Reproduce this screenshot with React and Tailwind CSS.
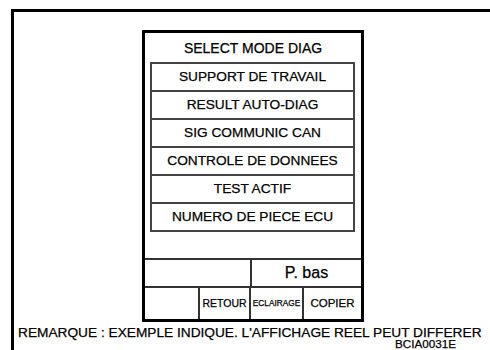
const font = { fontFamily: '"Liberation Sans", Arial, sans-serif' };

const items = [
  'SUPPORT DE TRAVAIL',
  'RESULT AUTO-DIAG',
  'SIG COMMUNIC CAN',
  'CONTROLE DE DONNEES',
  'TEST ACTIF',
  'NUMERO DE PIECE ECU',
];

export default function App() {
  return (
    <div
      className="w-[490px] h-[350px] bg-white overflow-hidden text-black [-webkit-text-stroke:0.25px_#000]"
      style={font}
    >
      {/* outer frame, open on the right and bottom */}
      <div className="relative ml-[11px] mt-[9px] h-[341px] border-l-[3px] border-t-[3px] border-black">
        <div className="ml-[128px] mt-[18px] w-[222px] border-[3px] border-black">
          <div className="h-[29px] flex items-center justify-center text-[14px] leading-none">
            SELECT MODE DIAG
          </div>

          <div className="ml-[5px] w-[205px] border-2 border-[#444]">
            {items.map((label, i) => (
              <div
                key={label}
                className={`h-[26px] flex items-center justify-center text-[13.7px] leading-none ${
                  i < items.length - 1 ? 'box-content border-b-2 border-[#444]' : ''
                }`}
              >
                {label}
              </div>
            ))}
          </div>

          <div className="h-[26px]" />

          <div className="flex h-[28px] border-t-2 border-[#333]">
            <div className="w-[107px] border-r-2 border-[#333]" />
            <div className="flex-1 flex items-center justify-center text-[16px] leading-none">P. bas</div>
          </div>

          <div className="flex h-[33px] border-t-2 border-[#333]">
            <div className="w-[55px] border-r-2 border-[#333]" />
            <div className="w-[51px] border-r-2 border-[#333] flex items-center justify-center text-[10.5px] leading-none">
              RETOUR
            </div>
            <div className="w-[53px] border-r-2 border-[#333] flex items-center justify-center text-[8.3px] leading-none">
              ECLAIRAGE
            </div>
            <div className="flex-1 flex items-center justify-center text-[11.5px] leading-none">COPIER</div>
          </div>
        </div>

        <div className="ml-[4px] mt-[3px] text-[13.7px] leading-[16px] whitespace-nowrap">
          REMARQUE : EXEMPLE INDIQUE. L'AFFICHAGE REEL PEUT DIFFERER
        </div>
        <div className="absolute left-[381px] top-[326px] text-[11.7px] leading-none">BCIA0031E</div>
      </div>
    </div>
  );
}
